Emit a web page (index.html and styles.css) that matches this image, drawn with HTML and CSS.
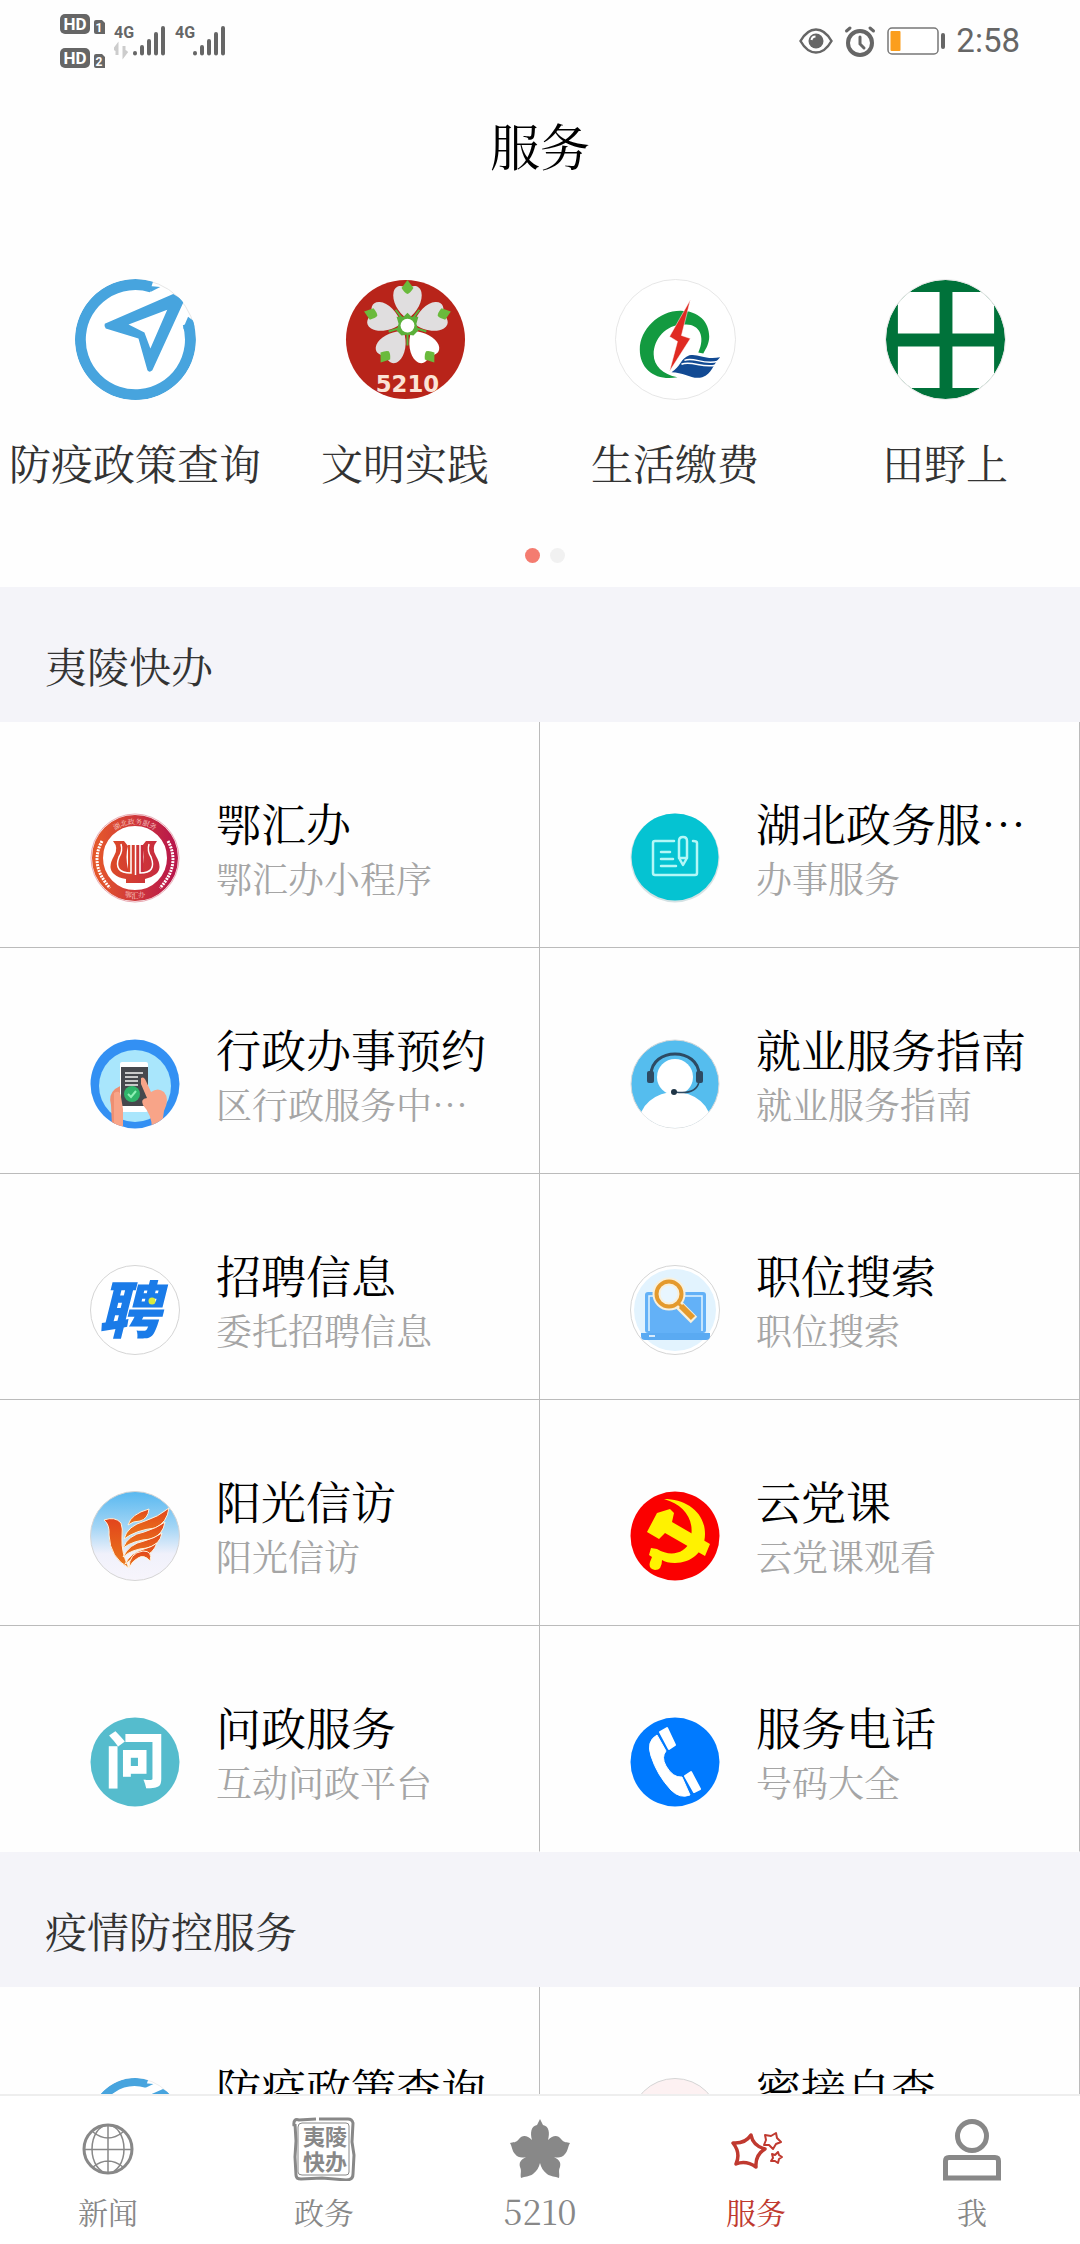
FILE: index.html
```
<!DOCTYPE html>
<html lang="zh-CN">
<head>
    <meta charset="UTF-8">
    <meta name="viewport" content="width=device-width, initial-scale=1.0">
    <title>服务</title>
    <link rel="stylesheet" href="styles.css">
</head>
<body>
    <!-- shared icon, used in the top grid and in the list -->
    <svg class="sprite" aria-hidden="true">
        <symbol id="icon-compass" viewBox="0 0 122 122">
            <clipPath id="compassClip"><circle cx="61" cy="61" r="61"/></clipPath>
            <circle cx="61" cy="61" r="60.5" fill="#fff" stroke="#e6e6e6"/>
            <g clip-path="url(#compassClip)">
                <path d="M75 7L86 8L76 13z" fill="#47a4de"/>
                <path d="M77 8A55.500 55.500 0 1 0 114 45" fill="none" stroke="#47a4de" stroke-width="11"/>
                <path fill="#47a4de" d="M114 38L122 44L120 50L109 50z"/>
                <path fill="#47a4de" fill-rule="evenodd" d="M30 45Q29 48 31 50L64 60L73 92Q75 95 78 92L110 22L99 15zM54 46L93 31L76 70L70 54z"/>
            </g>
        </symbol>
    </svg>

    <div class="status-bar">
        <div class="status-group">
            <svg class="signals" viewBox="0 0 136 56" aria-hidden="true">
                <g fill="#666">
                    <rect x="0" y="1" width="30" height="20" rx="5"/>
                    <path d="M34 9q0-2 2-2h6l3 3v11h-9q-2 0-2-2z"/>
                    <rect x="0" y="35" width="30" height="20" rx="5"/>
                    <path d="M34 43q0-2 2-2h6l3 3v11h-9q-2 0-2-2z"/>
                </g>
                <g class="hd-text">
                    <text x="15" y="17">HD</text>
                    <text x="15" y="51">HD</text>
                </g>
                <g class="sim-text">
                    <text x="39" y="19">1</text>
                    <text x="39" y="53">2</text>
                </g>
                <g class="net-text">
                    <text x="54" y="25">4G</text>
                    <text x="115" y="25">4G</text>
                </g>
            </svg>
            <svg class="bars" viewBox="0 0 90 56" aria-hidden="true">
                <path d="M3 42V33L0 37M10 33V42L13 38" fill="none" stroke="#ccc" stroke-width="3"/>
                <path d="M21 40v.5M28 34v6.500M35 28v12.500M42 21v19.500M49 15v25.500" fill="none" stroke="#666" stroke-width="4" stroke-linecap="round"/>
            </svg>
            <svg class="bars bars-second" viewBox="0 0 90 56" aria-hidden="true">
                <path d="M21 40v.5M28 34v6.500M35 28v12.500M42 21v19.500M49 15v25.500" fill="none" stroke="#666" stroke-width="4" stroke-linecap="round"/>
            </svg>
        </div>
        <div class="status-group status-right">
            <svg width="34" height="28" viewBox="0 0 34 28" aria-hidden="true">
                <path d="M1.500 14Q8 2.500 17 2.500T32.500 14Q26 25.500 17 25.500T1.500 14z" fill="none" stroke="#666" stroke-width="2.500"/>
                <circle cx="17" cy="14" r="7.500" fill="#666"/>
                <path d="M12.500 13Q13 9.500 16.500 9.500" fill="none" stroke="#fff" stroke-width="2"/>
            </svg>
            <svg width="32" height="32" viewBox="0 0 32 32" aria-hidden="true">
                <g fill="none" stroke="#666" stroke-width="4" stroke-linecap="round">
                    <circle cx="16" cy="18" r="12"/>
                    <path d="M16 12v7l4 4" stroke-width="3"/>
                    <path d="M2.500 6L6 3M29.500 6L26 3" stroke-width="3"/>
                </g>
            </svg>
            <svg width="58" height="28" viewBox="0 0 58 28" aria-hidden="true">
                <rect x="1" y="1" width="50" height="26" rx="4" fill="#fff" stroke="#777" stroke-width="1.500"/>
                <rect x="3.500" y="4" width="10" height="20" rx="1" fill="#fb9e1d"/>
                <rect x="54" y="6" width="4" height="16" rx="2" fill="#666"/>
            </svg>
            <span class="clock">2:58</span>
        </div>
    </div>

    <header class="title-bar">
        <h1>服务</h1>
    </header>

    <main class="content">
        <section class="quick">
            <div class="quick-grid">
                <a class="quick-item" href="#">
                    <svg class="quick-icon" aria-hidden="true"><use href="#icon-compass"/></svg>
                    <span>防疫政策查询</span>
                </a>
                <a class="quick-item" href="#">
                    <svg class="quick-icon" viewBox="0 0 122 122" aria-hidden="true">
                        <defs>
                            <g id="petal">
                                <path fill="currentColor" d="M0-7C-10-13-16-26-14-34C-12-42-4-41 0-37C4-41 12-42 14-34C16-26 10-13 0-7z"/>
                                <path fill="#6aba3c" d="M0-46L6-38Q3-33 0-32Q-3-33-6-38z"/>
                            </g>
                            <clipPath id="redClip"><circle cx="61" cy="61" r="60"/></clipPath>
                        </defs>
                        <circle cx="61" cy="61" r="60" fill="#b8241a"/>
                        <g clip-path="url(#redClip)">
                            <g transform="translate(63 47)" color="#e0dedf">
                                <use href="#petal"/>
                                <use href="#petal" transform="rotate(72)"/>
                                <use href="#petal" transform="rotate(144)" color="#fff"/>
                                <use href="#petal" transform="rotate(216)"/>
                                <use href="#petal" transform="rotate(288)"/>
                                <path d="M0 0L12-16M0 0L19 6M0 0V20M0 0L-19 6M0 0L-12-16" stroke="#58b43c" stroke-width="2"/>
                                <path d="M0-13L4-9L11-9L9-2L11 5L6 10L0 9L-6 10L-11 5L-9-2L-11-9L-4-9z" fill="#5bb03a"/>
                                <circle r="7" fill="#fff"/>
                            </g>
                            <text class="flower-text" x="63" y="114">5210</text>
                        </g>
                    </svg>
                    <span>文明实践</span>
                </a>
                <a class="quick-item" href="#">
                    <svg class="quick-icon" viewBox="0 0 122 122" aria-hidden="true">
                        <circle cx="61" cy="61" r="60.500" fill="#fff" stroke="#e6e6e6"/>
                        <path fill="#139a40" d="M63 99C42 103 25 92 25 71C25 51 44 32 66 32C84 32 95 43 95 58C95 65 92 70 89 75L84 74C92 57 84 44 69 46C51 46 39 61 39 76C39 87 48 96 63 99z"/>
                        <path fill="#e02a22" stroke="#fff" stroke-width=".5" d="M76 21L55 58L63 63L55 93L76 60L67 57z"/>
                        <path fill="#124a93" d="M57 94C66 89 66 80 75 77C84 75 90 82 106 79C98 87 98 96 88 99C78 102 70 94 57 94z"/>
                        <path fill="none" stroke="#fff" stroke-width="1.500" d="M70 82C80 78 88 87 104 83M67 86C77 82 88 90 101 87"/>
                    </svg>
                    <span>生活缴费</span>
                </a>
                <a class="quick-item" href="#">
                    <svg class="quick-icon" viewBox="0 0 122 122" aria-hidden="true">
                        <clipPath id="fieldClip"><circle cx="61" cy="61" r="60"/></clipPath>
                        <circle cx="61" cy="61" r="60" fill="#00723a"/>
                        <path clip-path="url(#fieldClip)" fill="#fff" d="M13 13h42v42H13zM68 13h42v42H68zM13 68h42v42H13zM68 68h42v42H68z"/>
                        <circle cx="61" cy="61" r="60.500" fill="none" stroke="#e6e6e6"/>
                    </svg>
                    <span>田野上</span>
                </a>
            </div>
            <div class="dots">
                <button class="dot active" type="button" aria-label="第1页"></button>
                <button class="dot" type="button" aria-label="第2页"></button>
            </div>
        </section>

        <section>
            <h2>夷陵快办</h2>
            <div class="service-grid">
                <a class="service" href="#">
                    <svg class="service-icon" viewBox="0 0 90 90" aria-hidden="true">
                        <defs>
                            <linearGradient id="ring" x1="0" x2="1"><stop offset="0" stop-color="#e4572b"/><stop offset="1" stop-color="#b9184a"/></linearGradient>
                            <linearGradient id="lyre" x1="0" x2="1"><stop offset="0" stop-color="#dc4a28"/><stop offset="1" stop-color="#c62a40"/></linearGradient>
                            <path id="arcTop" d="M14 30A35 35 0 0 1 76 30"/>
                            <path id="arcBottom" d="M28 81A40 40 0 0 0 62 81"/>
                        </defs>
                        <circle cx="45" cy="45" r="44" fill="#fff" stroke="#e9aab4"/>
                        <circle cx="45" cy="45" r="37.500" fill="none" stroke="url(#ring)" stroke-width="11"/>
                        <text class="emblem-text"><textPath href="#arcTop" startOffset="50%">湖北政务服务</textPath></text>
                        <text class="emblem-text"><textPath href="#arcBottom" startOffset="50%">鄂汇办</textPath></text>
                        <path fill="none" stroke="#fff" stroke-width="3" stroke-dasharray="2 1" d="M12 28Q-1 52 20 75M78 28Q91 52 70 75"/>
                        <path fill="url(#lyre)" d="M23 28H34L38 33Q35 43 38 56H52Q55 43 52 33L56 28H67Q61 35 66 43Q73 55 66 61Q61 65 55 66V70H36V66Q28 65 24 61Q17 55 24 43Q29 35 23 28z"/>
                        <path fill="url(#lyre)" d="M38 32H53V62H38z"/>
                        <path fill="none" stroke="#fff" stroke-width="1.500" d="M31 31Q33 38 29 44Q23 60 41 60V32M45.500 62V32M50 32V60Q67 60 61 44Q57 38 59 31"/>
                    </svg>
                    <div class="service-text">
                        <h3>鄂汇办</h3>
                        <p>鄂汇办小程序</p>
                    </div>
                </a>
                <a class="service" href="#">
                    <svg class="service-icon" viewBox="0 0 90 90" aria-hidden="true">
                        <circle cx="45" cy="45" r="44.500" fill="#d5e2e4"/>
                        <circle cx="45" cy="44" r="43.500" fill="#05c3d2"/>
                        <g fill="none" stroke="#b4f7f7" stroke-width="2.500" stroke-linecap="round" stroke-linejoin="round">
                            <path d="M44 28H25Q23 28 23 30V60Q23 62 25 62H65Q67 62 67 60V30Q67 28 63 28M31 39h9M31 46h12M31 53h15"/>
                            <path d="M49 45V28Q49 24 53 24T57 28V45L53 52zM49 45h8"/>
                        </g>
                    </svg>
                    <div class="service-text">
                        <h3>湖北政务服务网</h3>
                        <p>办事服务</p>
                    </div>
                </a>
                <a class="service" href="#">
                    <svg class="service-icon" viewBox="0 0 90 90" aria-hidden="true">
                        <clipPath id="handClip"><circle cx="45" cy="45" r="44.500"/></clipPath>
                        <circle cx="45" cy="45" r="44.500" fill="#3390f3"/>
                        <circle cx="45" cy="47" r="36" fill="#a9e6fc"/>
                        <g clip-path="url(#handClip)">
                            <path fill="#ee8f72" d="M22 88L21 66Q18 56 25 50L32 46V88z"/>
                            <rect x="30" y="23" width="28" height="50" rx="2" fill="#fff"/>
                            <path fill="#46484d" d="M31 28h27v39H31z"/>
                            <path stroke="#c9c9c9" stroke-width="2" d="M35 34h18M35 38h13M35 42h13M35 46h13"/>
                            <circle cx="42" cy="55" r="8" fill="#2fb56a"/>
                            <path d="M38 55l3 3l5-6" fill="none" stroke="#8ff0b5" stroke-width="2"/>
                            <path fill="#f8a488" d="M51 39Q54 37 56 42L61 53Q68 48 74 53Q80 60 74 72L72 86L62 90Q62 76 53 66Q50 60 57 59L51 45z"/>
                            <path fill="#f8a488" d="M24 54Q30 50 31 58L33 70V88L24 86z"/>
                        </g>
                    </svg>
                    <div class="service-text">
                        <h3>行政办事预约</h3>
                        <p>区行政服务中心预约</p>
                    </div>
                </a>
                <a class="service" href="#">
                    <svg class="service-icon" viewBox="0 0 90 90" aria-hidden="true">
                        <clipPath id="headClip"><circle cx="45" cy="45" r="44"/></clipPath>
                        <circle cx="45" cy="45" r="44" fill="#55bdee" stroke="#d9d9d9"/>
                        <g clip-path="url(#headClip)" fill="#fff">
                            <circle cx="45" cy="38" r="18"/>
                            <ellipse cx="45" cy="84" rx="36" ry="31"/>
                        </g>
                        <path d="M21 36C21 8 69 8 69 36" fill="none" stroke="#2d4a63" stroke-width="3"/>
                        <path d="M69 43Q66 56 45 53" fill="none" stroke="#2d4a63" stroke-width="1.500"/>
                        <rect x="17" y="32" width="7" height="12" rx="2" fill="#2d4a63"/>
                        <rect x="66" y="32" width="7" height="12" rx="2" fill="#2d4a63"/>
                        <circle cx="44" cy="53" r="3" fill="#1f3547"/>
                    </svg>
                    <div class="service-text">
                        <h3>就业服务指南</h3>
                        <p>就业服务指南</p>
                    </div>
                </a>
                <a class="service" href="#">
                    <svg class="service-icon" viewBox="0 0 90 90" aria-hidden="true">
                        <circle cx="45" cy="45" r="44.500" fill="#fff" stroke="#d5d5d5"/>
                        <text class="hire-text" x="39" y="68">聘</text>
                        <circle cx="62" cy="36" r="3.500" fill="#d9ea3c"/>
                    </svg>
                    <div class="service-text">
                        <h3>招聘信息</h3>
                        <p>委托招聘信息</p>
                    </div>
                </a>
                <a class="service" href="#">
                    <svg class="service-icon" viewBox="0 0 90 90" aria-hidden="true">
                        <circle cx="45" cy="45" r="44.500" fill="#fff" stroke="#d5d5d5"/>
                        <circle cx="45" cy="45" r="41" fill="#e2f3fe"/>
                        <rect x="15" y="27" width="61" height="41" rx="3" fill="#63b1f7"/>
                        <path d="M19 66V31H72V66" fill="none" stroke="#e2f3fe" stroke-width="1.500"/>
                        <path d="M11 68H80V71Q80 75 76 75H15Q11 75 11 71z" fill="#5aaaf2"/>
                        <path d="M19 71h6" stroke="#fff" stroke-width="1.500"/>
                        <path d="M48 39L64 55" stroke="#f8f0dc" stroke-width="9"/>
                        <circle cx="39" cy="29" r="12.500" fill="#e8f6ff" stroke="#f8f0dc" stroke-width="8"/>
                        <circle cx="39" cy="29" r="12.500" fill="none" stroke="#e49a2d" stroke-width="4"/>
                        <path d="M48 38L53 43" stroke="#e49a2d" stroke-width="3"/>
                        <path d="M51 41L63 53" stroke="#e49a2d" stroke-width="6"/>
                    </svg>
                    <div class="service-text">
                        <h3>职位搜索</h3>
                        <p>职位搜索</p>
                    </div>
                </a>
                <a class="service" href="#">
                    <svg class="service-icon" viewBox="0 0 90 90" aria-hidden="true">
                        <defs>
                            <linearGradient id="sky" x1="0" y1="0" x2="0" y2="1"><stop offset="0" stop-color="#58b8f0"/><stop offset=".4" stop-color="#a3d5f5"/><stop offset=".7" stop-color="#f0f1fb"/><stop offset="1" stop-color="#f7f5fc"/></linearGradient>
                            <linearGradient id="bird" x1="0" y1="0" x2="0" y2="1"><stop offset="0" stop-color="#e2441c"/><stop offset="1" stop-color="#ea7a1c"/></linearGradient>
                        </defs>
                        <circle cx="45" cy="45" r="44.500" fill="url(#sky)" stroke="#d5d5d5"/>
                        <g fill="url(#bird)" stroke="#fff3dc" stroke-width="1">
                            <path d="M14 29Q25 25 31 32Q33 37 32 46Q31 62 39 77Q20 67 19 44Q20 34 14 29z"/>
                            <path d="M38 34Q41 23 59 18Q58 28 50 30Q43 30 38 34z"/>
                            <path d="M34 48Q37 35 55 30Q68 26 79 17Q77 32 65 37Q46 39 34 48z"/>
                            <path d="M33 57Q38 44 54 41Q67 37 75 31Q73 44 61 48Q44 49 33 57z"/>
                            <path d="M33 66Q39 53 54 50Q65 47 72 42Q70 54 57 57Q42 58 33 66z"/>
                            <path d="M35 73Q40 62 54 58Q62 56 67 52Q63 63 54 65Q43 66 35 73z"/>
                            <path d="M39 77Q39 62 53 60Q63 60 60 70Q54 63 48 67Q42 70 39 77z"/>
                        </g>
                    </svg>
                    <div class="service-text">
                        <h3>阳光信访</h3>
                        <p>阳光信访</p>
                    </div>
                </a>
                <a class="service" href="#">
                    <svg class="service-icon" viewBox="0 0 90 90" aria-hidden="true">
                        <circle cx="45" cy="45" r="44.500" fill="#fb0000"/>
                        <g fill="#fff200">
                            <path d="M34 8C56 8 75 21 75 43C75 61 61 72 45 72C39 72 35 71 32 69Q32 79 25 79Q18 78 20 71L22 66L19 64L21 57L27 58C40 66 55 63 60 50C66 30 55 14 34 8z"/>
                            <path d="M17 41L27 22L40 18L44 22L42 31L80 53L75 65L35 42L29 48z"/>
                        </g>
                    </svg>
                    <div class="service-text">
                        <h3>云党课</h3>
                        <p>云党课观看</p>
                    </div>
                </a>
                <a class="service" href="#">
                    <svg class="service-icon" viewBox="0 0 90 90" aria-hidden="true">
                        <circle cx="45" cy="45" r="44.500" fill="#55bccd"/>
                        <text class="ask-text" x="45" y="66">问</text>
                    </svg>
                    <div class="service-text">
                        <h3>问政服务</h3>
                        <p>互动问政平台</p>
                    </div>
                </a>
                <a class="service" href="#">
                    <svg class="service-icon" viewBox="0 0 90 90" aria-hidden="true">
                        <circle cx="45" cy="45" r="44.500" fill="#007aff"/>
                        <g fill="#fff" stroke="#fff" stroke-linejoin="round">
                            <path d="M27 18L36 34Q31 40 36 49Q43 61 52 60L60 78Q50 82 41 73Q27 58 21 39Q16 24 27 18z"/>
                            <path d="M30 15L37 11L45 28L39 32z" stroke-width="2"/>
                            <path d="M55 59L61 55L70 72L64 75z" stroke-width="2"/>
                        </g>
                    </svg>
                    <div class="service-text">
                        <h3>服务电话</h3>
                        <p>号码大全</p>
                    </div>
                </a>
            </div>
        </section>

        <section>
            <h2>疫情防控服务</h2>
            <div class="service-grid">
                <a class="service" href="#">
                    <svg class="service-icon" aria-hidden="true"><use href="#icon-compass"/></svg>
                    <div class="service-text">
                        <h3>防疫政策查询</h3>
                        <p>防疫政策查询</p>
                    </div>
                </a>
                <a class="service" href="#">
                    <svg class="service-icon" viewBox="0 0 90 90" aria-hidden="true">
                        <circle cx="45" cy="45" r="44.500" fill="#fdf1f2" stroke="#d5d5d5"/>
                    </svg>
                    <div class="service-text">
                        <h3>密接自查</h3>
                        <p>密接自查</p>
                    </div>
                </a>
            </div>
        </section>
    </main>

    <nav class="tab-bar">
        <a class="tab" href="#">
            <svg viewBox="0 0 64 64" aria-hidden="true">
                <g fill="none" stroke="#888" stroke-width="1.500">
                    <circle cx="32" cy="32" r="24" stroke-width="3"/>
                    <ellipse cx="32" cy="32" rx="16" ry="24"/>
                    <path d="M32 8V56M8 32.500H56M17 15Q32 27 47 15M17 50Q32 38 47 50"/>
                </g>
            </svg>
            <span>新闻</span>
        </a>
        <a class="tab" href="#">
            <svg viewBox="0 0 64 64" aria-hidden="true">
                <g fill="none" stroke="#888">
                    <path stroke-width="3" d="M24 2L7 3Q1 1 2 9M3 7L4 24L3 40L4 58Q4 62 9 62L30 61L54 63Q61 63 61 57L62 38L60 25L61 6Q60 2 56 2H27"/>
                    <path d="M10 6H54Q57 6 57 9V55Q57 58 54 58H10Q6 58 6 55V10Q6 6 10 6z"/>
                </g>
                <text class="stamp-text" x="33" y="28">夷陵</text>
                <text class="stamp-text" x="33" y="53">快办</text>
            </svg>
            <span>政务</span>
        </a>
        <a class="tab" href="#">
            <svg viewBox="0 0 64 64" aria-hidden="true">
                <path fill="#888" d="M32 2L35 8C41 9 42 16 40 23C45 18 50 18 53 22C56 26 59 25 62 26C60 29 60 34 57 37C54 41 50 41 46 40C52 43 53 46 52 50C50 54 52 57 51 61C47 59 43 60 39 57C35 54 33 50 32 46C31 50 29 54 25 57C21 60 17 59 13 61C12 57 14 54 12 50C11 46 12 43 18 40C14 41 10 41 7 37C4 34 4 29 2 26C5 25 8 26 11 22C14 18 19 18 24 23C22 16 23 9 29 8z"/>
            </svg>
            <span class="tab-number">5210</span>
        </a>
        <a class="tab active" href="#" aria-current="page">
            <svg viewBox="0 0 64 64" aria-hidden="true">
                <g fill="none" stroke="#c0392f" stroke-linejoin="round">
                    <path stroke-width="3.500" d="M27 18Q29 29 41 32Q31 38 32 50Q22 43 12 47Q17 36 9 26Q21 27 27 18z"/>
                    <path stroke-width="2" d="M52 16L53 21L57 25L52 27L49 32L45 28L40 28L42 23L41 18L47 19z"/>
                    <path stroke-width="2" d="M54 35L55 38L58 40L55 42L54 46L51 44L47 44L49 41L48 37L51 38z"/>
                </g>
            </svg>
            <span>服务</span>
        </a>
        <a class="tab" href="#">
            <svg viewBox="0 0 64 64" aria-hidden="true">
                <g fill="none" stroke="#888" stroke-width="5">
                    <circle cx="32" cy="19" r="14.500"/>
                    <path d="M5.500 61V44Q5.500 40.500 9 40.500H55Q58.500 40.500 58.500 44V61z"/>
                </g>
            </svg>
            <span>我</span>
        </a>
    </nav>
</body>
</html>
```

FILE: styles.css
```
* {
    box-sizing: border-box;
}

body {
    display: flex;
    flex-direction: column;
    height: 100vh;
    margin: 0;
    font-family: "Noto Serif CJK SC", "Noto Sans CJK SC", serif;
    font-weight: 400;
    color: #000;
    background-color: #fefefe;
}

h1, h2, h3, p {
    margin: 0;
    font-weight: inherit;
}

a {
    color: inherit;
    text-decoration: none;
}

svg {
    display: block;
    flex-shrink: 0;
}

.sprite {
    position: absolute;
    width: 0;
    height: 0;
}

/* status bar */
.status-bar {
    display: flex;
    justify-content: space-between;
    align-items: center;
    height: 80px;
    padding: 2px 60px 0;
}

.status-group {
    display: flex;
    align-items: center;
}

.signals {
    width: 136px;
    height: 56px;
}

.bars {
    width: 90px;
    height: 56px;
    margin-left: -82px;
}

.bars-second {
    margin-left: -30px;
}

.hd-text, .sim-text, .net-text {
    font-family: Roboto, sans-serif;
    font-weight: 700;
    text-anchor: middle;
    fill: #fff;
}

.hd-text {
    font-size: 17px;
}

.sim-text {
    font-size: 12px;
}

.net-text {
    font-size: 16px;
    text-anchor: start;
    fill: #666;
}

.status-right {
    gap: 11px;
}

.clock {
    font-family: Roboto, sans-serif;
    font-size: 33px;
    line-height: 40px;
    color: #666;
}

.title-bar {
    padding: 28px 0 32px;
    text-align: center;
}

h1 {
    font-size: 50px;
    line-height: 72px;
}

.content {
    flex: 1;
    min-height: 0;
    overflow-y: auto;
    scrollbar-width: none;
}

/* top shortcuts */
.quick {
    padding: 67px 0 24px;
}

.quick-grid {
    display: grid;
    grid-template-columns: repeat(4, 1fr);
}

.quick-item {
    display: flex;
    flex-direction: column;
    align-items: center;
    gap: 32px;
    font-size: 42px;
    line-height: 60px;
    color: #333;
    white-space: nowrap;
}

.quick-icon {
    width: 121px;
    height: 121px;
}

.flower-text {
    font-family: "DejaVu Sans", sans-serif;
    font-size: 23px;
    font-weight: 700;
    text-anchor: middle;
    fill: #fbe3d6;
}

.dots {
    display: flex;
    justify-content: center;
    padding-top: 56px;
}

.dot {
    width: 15px;
    height: 15px;
    margin-left: 10px;
    padding: 0;
    border: none;
    border-radius: 50%;
    background-color: #f1f1f1;
}

.dot.active {
    background-color: #f47c70;
}

/* service list */
h2 {
    padding: 48px 45px 27px;
    font-size: 42px;
    line-height: 60px;
    color: #333;
    background-color: #f4f4f9;
}

.service-grid {
    display: grid;
    grid-template-columns: 1fr 1fr;
}

.service {
    display: flex;
    gap: 36px;
    min-width: 0;
    padding: 68px 42px 43px 90px;
    border-right: 1px solid #bbb;
    border-bottom: 1px solid #bbb;
}

.service:nth-last-child(-n+2) {
    border-bottom-color: transparent;
}

.service-icon {
    width: 90px;
    height: 90px;
    margin-top: 23px;
}

.service-text {
    flex: 1;
    min-width: 0;
}

.service-text h3, .service-text p {
    overflow: hidden;
    white-space: nowrap;
    text-overflow: ellipsis;
}

.service-text h3 {
    font-size: 45px;
    line-height: 66px;
}

.service-text p {
    margin-top: -4px;
    font-size: 36px;
    line-height: 52px;
    color: #a5a5a5;
}

.emblem-text {
    font-size: 7px;
    text-anchor: middle;
    fill: #fbd5cf;
}

.hire-text, .ask-text, .stamp-text {
    font-family: "Noto Sans CJK SC", sans-serif;
    font-weight: 900;
    text-anchor: middle;
}

.hire-text {
    font-size: 62px;
    font-style: italic;
    fill: #1a7be8;
}

.ask-text {
    font-size: 60px;
    fill: #fff;
}

.stamp-text {
    font-size: 22px;
    font-weight: 700;
    fill: #888;
}

/* bottom tabs */
.tab-bar {
    display: flex;
    border-top: 2px solid #eee;
    background-color: #fff;
}

.tab {
    display: flex;
    flex: 1;
    flex-direction: column;
    align-items: center;
    gap: 10px;
    padding: 21px 0 13px;
    font-size: 30px;
    line-height: 40px;
    color: #888;
}

.tab svg {
    width: 64px;
    height: 64px;
}

.tab-number {
    font-size: 34px;
}

.tab.active {
    color: #c0392f;
}
```
